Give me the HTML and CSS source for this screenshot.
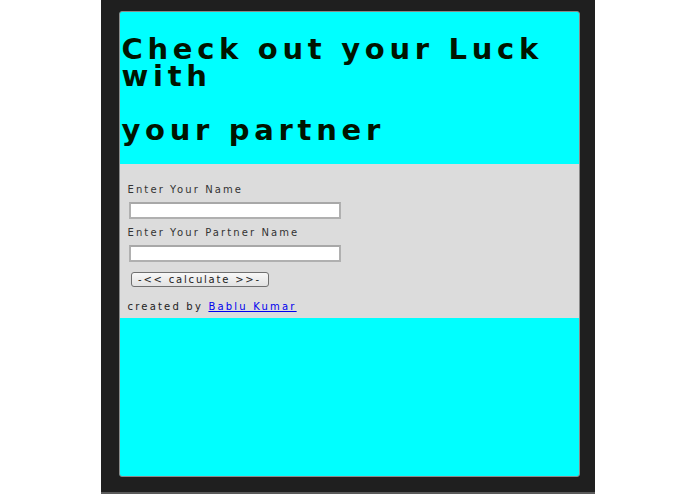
FILE: index.html
```html
<!DOCTYPE html>
<html>
<head>
<meta charset="utf-8">
<title>Luck Calculator</title>
<link rel="stylesheet" href="styles.css">
</head>
<body>
<div class="frame">
  <div class="card">
    <h1 class="title">Check out your Luck with<br><br>your partner</h1>
    <form class="form">
      <label class="label">Enter Your Name</label>
      <input class="field" type="text">
      <label class="label">Enter Your Partner Name</label>
      <input class="field" type="text">
      <button class="btn" type="button">-&lt;&lt; calculate &gt;&gt;-</button>
      <p class="credit">created by <a href="#" class="link">Bablu Kumar</a></p>
    </form>
  </div>
</div>
</body>
</html>
```
FILE: styles.css
```css
html, body {
  margin: 0;
  padding: 0;
  background: #ffffff;
}
.frame {
  width: 494px;
  height: 494px;
  margin: 0 auto;
  background: #1f1f1f;
  padding: 11px 15px 15px 18px;
  box-sizing: border-box;
  border-bottom: 2px solid #5a5a5a;
}
.card {
  height: 100%;
  box-sizing: border-box;
  background: #00ffff;
  border: 1px solid #8a8a8a;
  border-radius: 3px;
  display: flex;
  flex-direction: column;
}
.title {
  margin: 0;
  padding: 24px 0 20px 2px;
  font-family: "DejaVu Sans", sans-serif;
  font-weight: bold;
  font-size: 29px;
  line-height: 27px;
  letter-spacing: 4.7px;
  color: #001400;
}
.form {
  background: #dcdcdc;
  padding: 20px 9px 5px 8px;
  display: flex;
  flex-direction: column;
  align-items: flex-start;
}
.label {
  font-family: "DejaVu Sans", sans-serif;
  font-size: 10px;
  letter-spacing: 2.1px;
  color: #333;
  line-height: 12px;
}
.field {
  width: 212px;
  height: 17px;
  box-sizing: border-box;
  margin: 6px 0 8px 1px;
  border: 2px solid #b0b0b0;
  border-top-color: #a8a8a8;
  background: #fff;
  padding: 0;
}
.btn {
  margin: 2px 0 0 3px;
  width: 138px;
  height: 15px;
  padding: 0;
  border: 1px solid #707070;
  border-radius: 3px;
  background: linear-gradient(#f8f8f8, #e2e2e2);
  font-family: "DejaVu Sans", sans-serif;
  font-size: 10px;
  letter-spacing: 1.8px;
  color: #222;
  line-height: 12px;
}
.credit {
  margin: 14px 0 0 0;
  font-family: "DejaVu Sans", sans-serif;
  font-size: 10px;
  letter-spacing: 2.2px;
  color: #222;
  line-height: 12px;
}
.link {
  color: #0000ee;
  text-decoration: underline;
}
```
